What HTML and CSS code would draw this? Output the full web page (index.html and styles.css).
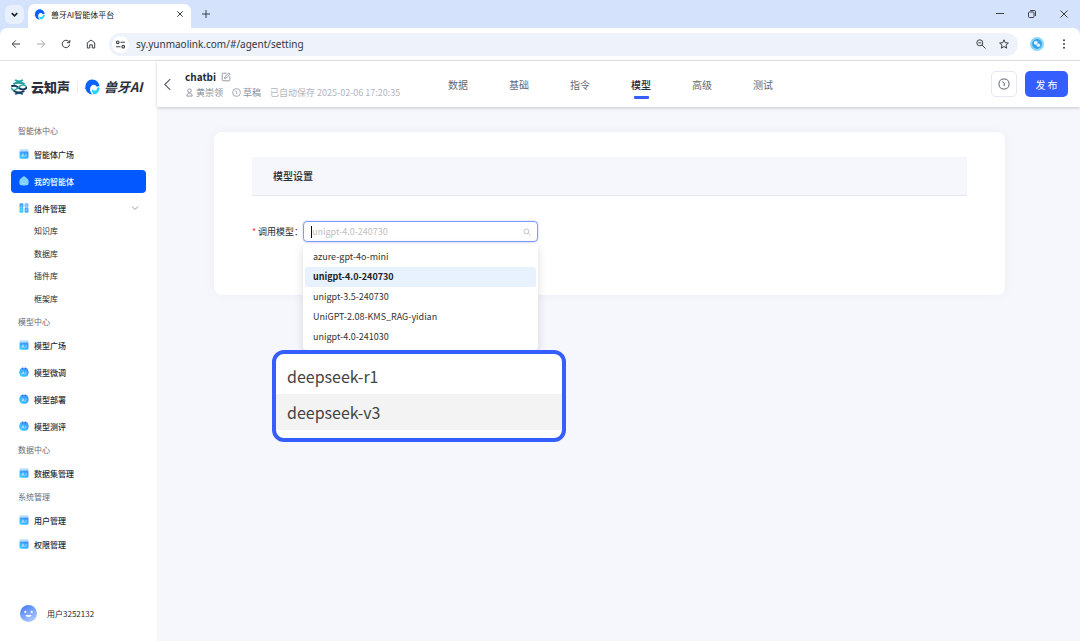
FILE: index.html
```html
<!DOCTYPE html>
<html lang="zh-CN">
<head>
<meta charset="utf-8">
<title>兽牙AI智能体平台</title>
<link rel="stylesheet" href="styles.css">
</head>
<body>
<svg class="sprite" aria-hidden="true">
  <defs>
    <linearGradient id="sky2" x1="1" y1="0" x2="0" y2="1"><stop offset="0" stop-color="#4a86ff"/><stop offset="1" stop-color="#2fd6ff"/></linearGradient>
    <linearGradient id="face" x1="0" y1="0" x2="0.6" y2="1"><stop offset="0" stop-color="#3b76f6"/><stop offset="1" stop-color="#a9c8ff"/></linearGradient>
    <symbol id="i-plaza" viewBox="0 0 10 10">
      <rect x="0.5" y="0.3" width="9" height="4" rx="1" fill="#b9dfff"/>
      <rect x="0.5" y="2.6" width="9" height="7.100" rx="1.4" fill="url(#sky2)"/>
      <path d="M2.600 7.800 4 4.800 5.400 7.800M3.100 6.900h1.800M7 4.800v3" fill="none" stroke="#c4e8ff" stroke-width="0.7"/>
    </symbol>
    <symbol id="i-robot" viewBox="0 0 10 10">
      <rect x="0" y="3" width="10" height="4.5" rx="1.5" fill="#8bd0ff"/>
      <rect x="0.800" y="0.800" width="8.400" height="8.900" rx="3.200" fill="url(#sky2)"/>
      <path d="M3.500 .6v1.8M6.500 .6v1.8" stroke="#2c6df0" stroke-width="0.9"/>
      <path d="M2.800 7.400 4.100 4.600 5.400 7.400M3.200 6.600h1.800M6.800 4.600v2.800" fill="none" stroke="#c4e8ff" stroke-width="0.7"/>
    </symbol>
    <symbol id="i-home" viewBox="0 0 10 10">
      <path d="M5 .3C6.500.8 8.300 2.600 9.200 3.600c.6.800.6 4 .1 4.900-.7 1.300-7.900 1.300-8.600 0C.2 7.600.2 4.400.8 3.600 1.700 2.600 3.500.8 5 .3Z" fill="#7fd2ff"/>
      <path d="M2.600 7.200h4.800" stroke="#a9e0ff" stroke-width="0.800"/>
    </symbol>
    <symbol id="i-grid" viewBox="0 0 10 10">
      <rect x="0.500" y="0.300" width="3.900" height="4.500" rx="0.800" fill="#49a5ff"/><rect x="5.600" y="0.300" width="3.900" height="4.500" rx="0.800" fill="#7cbcff"/>
      <rect x="0.500" y="4.800" width="3.900" height="4.900" rx="0.800" fill="#35cdff"/><rect x="5.600" y="4.800" width="3.900" height="4.900" rx="0.800" fill="#52a8ff"/>
      <path d="M1.800 3.400h1.400M6.800 3.400h1.400M1.800 7h1.400M6.800 7h1.400" stroke="#c4e8ff" stroke-width="0.700"/>
    </symbol>
    <symbol id="i-wave" viewBox="0 0 16 16">
      <path d="M8.200.5C12.200.5 15.400 3.700 15.500 7.600c-1-.5-2-.4-2.900.2C11.900 5.600 8.900 5 7.200 6.900 5.200 9.200 5.900 12.800 8.400 15.500 4.800 15.200 2.300 13 1.700 9.900L.4 8.900c.7-.1 1-.3 1.100-.9C1.300 3.900 4.300.5 8.200.5Z" fill="#0a62ff"/>
      <path d="M15.600 8.900c-.8-.8-2-.8-2.700 0 .3 1.900-1.300 3-2.900 2.600-1-.2-1.600-.8-1.900-1.500-.5 2.200.200 4.200 1.800 5.400 3.200-.3 5.600-2.900 5.700-6.500Z" fill="#22d6fa"/>
    </symbol>
    <symbol id="i-clock" viewBox="0 0 12 12"><rect x="1" y="1" width="10" height="10" rx="4.300" fill="none" stroke="currentColor"/><path d="M4.200 3.300 6.200 5.300V8" fill="none" stroke="currentColor"/></symbol>
  </defs>
</svg>

<header class="browser">
  <div class="tabstrip">
    <button class="tab-search" aria-label="搜索标签页"><svg viewBox="0 0 10 10"><path d="M2.500 3.700 5 6.200 7.500 3.700"/></svg></button>
    <div class="browser-tab">
      <svg class="favicon"><use href="#i-wave"/></svg>
      <span class="tab-title">兽牙AI智能体平台</span>
      <button class="plain" aria-label="关闭标签页"><svg class="line" viewBox="0 0 10 10"><path d="M2.300 2.300 7.700 7.700M7.700 2.300 2.300 7.700"/></svg></button>
    </div>
    <button class="plain new-tab" aria-label="新标签页"><svg class="line" viewBox="0 0 10 10"><path d="M5 1v8M1 5h8"/></svg></button>
    <div class="window-buttons">
      <button class="plain" aria-label="最小化"><svg class="line" viewBox="0 0 10 10"><path d="M1 4.500h8"/></svg></button>
      <button class="plain" aria-label="还原"><svg class="line" viewBox="0 0 10 10"><rect x="1.500" y="3" width="5.500" height="5.500" rx="1"/><path d="M3.200 1.500h4.300a1 1 0 0 1 1 1v4.500"/></svg></button>
      <button class="plain" aria-label="关闭"><svg class="line" viewBox="0 0 10 10"><path d="M1.500 1.500 8.500 8.500M8.500 1.500 1.500 8.500"/></svg></button>
    </div>
  </div>
  <div class="toolbar">
    <button class="plain" aria-label="后退"><svg class="line" viewBox="0 0 10 10"><path d="M9 5H1.300M4.800 1.400 1.200 5l3.600 3.600"/></svg></button>
    <button class="plain muted" aria-label="前进"><svg class="line" viewBox="0 0 10 10"><path d="M1 5h7.700M5.200 1.400 8.800 5 5.200 8.600"/></svg></button>
    <button class="plain" aria-label="刷新"><svg class="line" viewBox="0 0 10 10"><path d="M8.600 5.500A3.700 3.700 0 1 1 7.700 2.500L8.800 3.600M8.800 1v2.700H6"/></svg></button>
    <button class="plain" aria-label="主页"><svg class="line" viewBox="0 0 10 10"><path d="M1.300 9V3.800L5 1l3.700 2.800V9H6.300V5.800H3.700V9Z"/></svg></button>
    <div class="address">
      <button class="site-info" aria-label="网站信息"><svg class="line" viewBox="0 0 10 10"><circle cx="2.500" cy="3" r="1.200"/><path d="M5 3h4M1 7h4"/><circle cx="7.500" cy="7" r="1.200"/></svg></button>
      <input class="url" aria-label="地址栏" value="sy.yunmaolink.com/#/agent/setting">
      <button class="plain" aria-label="缩放"><svg class="line" viewBox="0 0 10 10"><circle cx="3.800" cy="3.800" r="3"/><path d="M6 6 9.500 9.500M2.400 3.800h2.800"/></svg></button>
      <button class="plain" aria-label="收藏"><svg class="line" viewBox="0 0 10 10"><path d="M5 .8 6.200 3.700 9.400 4 7 6.100 7.700 9.200 5 7.500 2.300 9.200 3 6.100.6 4 3.800 3.700Z"/></svg></button>
    </div>
    <button class="plain profile" aria-label="个人资料"><svg viewBox="0 0 14 14"><circle cx="7" cy="7" r="7" fill="#8fd7fa"/><circle cx="7" cy="7" r="4.900" fill="#37a5ee"/><circle cx="5.800" cy="5.800" r="1.900" fill="#f2fbff"/><circle cx="8.400" cy="8.300" r="1.700" fill="#d9f1ff"/></svg></button>
    <button class="plain more" aria-label="更多"><svg viewBox="0 0 10 10"><circle cx="5" cy="1.200" r="1"/><circle cx="5" cy="5" r="1"/><circle cx="5" cy="8.800" r="1"/></svg></button>
  </div>
</header>

<div class="app">
  <aside class="sidebar">
    <div class="brands">
      <div class="brand">
        <svg viewBox="0 0 16 16" fill="none"><path d="M4.200.8C5.500 2.800 10.500 2.800 11.800.8" stroke="#1ea6a0" stroke-width="1.800"/><path d="M2.600 5.300C4.200 3.200 11.800 3.200 13.400 5.300" stroke="#1c9b9b" stroke-width="1.800"/><path d="M.3 7.200C4.500 5.600 6 7.500 8 9c2 1.500 4.500 2.200 6.800.5.500-.5.700-1.200.4-2" stroke="#16345c" stroke-width="2"/><path d="M.8 8.600c-.3 1.600.6 2.800 2.600 2.600C6.500 10.800 8 6.500 11 6c1.500-.2 3 .2 4 1" stroke="#2aa7a2" stroke-width="1.600"/><path d="M2.600 12c3 1.600 7.800 1.600 10.800 0" stroke="#16345c" stroke-width="1.700"/><path d="M4.200 15.400c1.500-1.800 6.100-1.800 7.600 0" stroke="#17566f" stroke-width="1.800"/></svg>
        <span class="brand-name">云知声</span>
      </div>
      <div class="brand">
        <svg><use href="#i-wave"/></svg>
        <span class="brand-name slanted">兽牙AI</span>
      </div>
    </div>
    <nav class="menu">
      <section>
        <h2>智能体中心</h2>
        <ul>
          <li><a href="#plaza"><svg><use href="#i-plaza"/></svg>智能体广场</a></li>
          <li><a class="active" href="#mine"><svg><use href="#i-home"/></svg>我的智能体</a></li>
          <li><a href="#parts"><svg><use href="#i-grid"/></svg>组件管理<svg class="chevron" viewBox="0 0 8 8"><path d="M1 2.500 4 5.500 7 2.500"/></svg></a>
            <div class="submenu"><a href="#kb">知识库</a><a href="#db">数据库</a><a href="#plugin">插件库</a><a href="#frame">框架库</a></div>
          </li>
        </ul>
      </section>
      <section>
        <h2>模型中心</h2>
        <ul>
          <li><a href="#models"><svg><use href="#i-plaza"/></svg>模型广场</a></li>
          <li><a href="#tune"><svg><use href="#i-robot"/></svg>模型微调</a></li>
          <li><a href="#deploy"><svg><use href="#i-robot"/></svg>模型部署</a></li>
          <li><a href="#eval"><svg><use href="#i-robot"/></svg>模型测评</a></li>
        </ul>
      </section>
      <section>
        <h2>数据中心</h2>
        <ul><li><a href="#datasets"><svg><use href="#i-plaza"/></svg>数据集管理</a></li></ul>
      </section>
      <section>
        <h2>系统管理</h2>
        <ul class="tight">
          <li><a href="#users"><svg><use href="#i-plaza"/></svg>用户管理</a></li>
          <li><a href="#roles"><svg><use href="#i-plaza"/></svg>权限管理</a></li>
        </ul>
      </section>
    </nav>
    <div class="account">
      <svg viewBox="0 0 16 16"><circle cx="8" cy="8" r="8" fill="url(#face)"/><circle cx="5" cy="6.500" r="1" fill="#fff"/><circle cx="11" cy="6.500" r="1" fill="#fff"/><path d="M5.200 9.300h5.600c-.6 2.600-5 2.600-5.600 0Z" fill="#fff"/></svg>
      <span>用户3252132</span>
    </div>
  </aside>

  <div class="workspace">
    <header class="topbar">
      <div class="agent">
        <button class="plain back" aria-label="返回"><svg class="line" viewBox="0 0 8 12"><path d="M6.500 1 1.500 6l5 5"/></svg></button>
        <div class="agent-info">
          <div class="agent-title"><h1>chatbi</h1><button class="plain edit" aria-label="编辑"><svg class="line" viewBox="0 0 10 10"><path d="M5.500 1.200H2.200a1 1 0 0 0-1 1v5.600a1 1 0 0 0 1 1h5.600a1 1 0 0 0 1-1V4.500M3.500 6.500l.4-1.700L8 .9l1.200 1.200-4 4Z"/></svg></button></div>
          <div class="agent-meta">
            <span class="who"><svg class="line" viewBox="0 0 10 10"><circle cx="5" cy="3" r="2"/><path d="M2 9c0-4.500 6-4.500 6 0Z"/></svg>黄崇领</span>
            <span class="who"><svg><use href="#i-clock"/></svg>草稿</span>
            <span class="saved">已自动保存 2025-02-06 17:20:35</span>
          </div>
        </div>
      </div>
      <nav class="tabs"><a href="#data">数据</a><a href="#base">基础</a><a href="#prompt">指令</a><a class="current" href="#model">模型</a><a href="#adv">高级</a><a href="#test">测试</a></nav>
      <div class="actions">
        <button class="history" aria-label="历史版本"><svg><use href="#i-clock"/></svg></button>
        <button class="publish">发 布</button>
      </div>
    </header>
    <main>
      <section class="card">
        <h2 class="card-title">模型设置</h2>
        <form class="field">
          <label for="model"><span class="required">*</span>调用模型：</label>
          <div class="select">
            <div class="control">
              <span class="caret"></span>
              <input id="model" type="text" role="combobox" aria-expanded="true" aria-controls="models" placeholder="unigpt-4.0-240730">
              <svg class="line" viewBox="0 0 10 10"><circle cx="4.200" cy="4.200" r="3"/><path d="M6.500 6.500 9.300 9.300"/></svg>
            </div>
            <ul class="options" id="models" role="listbox">
              <li role="option">azure-gpt-4o-mini</li>
              <li class="selected" role="option" aria-selected="true">unigpt-4.0-240730</li>
              <li role="option">unigpt-3.5-240730</li>
              <li role="option">UniGPT-2.08-KMS_RAG-yidian</li>
              <li role="option">unigpt-4.0-241030</li>
            </ul>
            <ul class="callout" role="listbox" aria-label="DeepSeek">
              <li role="option">deepseek-r1</li>
              <li class="hovered" role="option">deepseek-v3</li>
            </ul>
          </div>
        </form>
      </section>
    </main>
  </div>
</div>
</body>
</html>
```
FILE: styles.css
```css
* { box-sizing: border-box; }
body {
  margin: 0;
  min-height: 100vh;
  display: flex;
  flex-direction: column;
  font-family: "Noto Sans CJK SC", sans-serif;
  font-size: 9px;
  color: #252a35;
  background: #f6f7fc;
}
h1, h2, ul { margin: 0; padding: 0; font-size: inherit; }
ul { list-style: none; }
a { color: inherit; text-decoration: none; }
button, input { font: inherit; color: inherit; }
svg { flex: none; display: block; }
.sprite { position: absolute; width: 0; height: 0; }
.line { fill: none; stroke: currentColor; }
.plain {
  padding: 0;
  border: 0;
  background: none;
  display: grid;
  place-items: center;
}
.plain svg { width: 10px; height: 10px; }

/* Browser frame */
.browser { background: #d5e2fc; color: #3c4046; border-bottom: 1px solid #dfe1e5; }
.tabstrip { display: flex; align-items: center; height: 28px; padding: 0 11px 0 5px; }
.tab-search {
  width: 19px; height: 19px; padding: 4px;
  border: 0; border-radius: 6px; background: #e9f0fd;
}
.tab-search svg { fill: none; stroke: #222; stroke-width: 1.5; }
.browser-tab {
  align-self: flex-end;
  display: flex; align-items: center; gap: 6px;
  width: 163px; height: 24px; margin-left: 4px; padding: 0 6px 4px;
  border-radius: 7px 7px 0 0; background: #fff;
}
.favicon { width: 11px; height: 11px; }
.tab-title { flex: 1; font-size: 8px; color: #222; }
.new-tab { margin-left: 10px; }
.window-buttons { display: flex; gap: 22px; margin-left: auto; }
.toolbar {
  display: flex; align-items: center; gap: 15px;
  height: 32px; padding: 0 11px;
  border-radius: 7px 7px 0 0; background: #fff;
}
.muted { color: #a5a7ab; }
.address {
  flex: 1; display: flex; align-items: center; gap: 13px;
  height: 23px; margin-right: -3px; margin-left: -2px; padding: 0 9px 0 3px;
  border-radius: 12px; background: #edf2fb;
}
.site-info {
  width: 17px; height: 17px; padding: 3px;
  border: 0; border-radius: 50%; background: #fff;
}
.url {
  flex: 1; min-width: 0; margin-left: -6px; padding: 0;
  border: 0; outline: 0; background: none;
  font-family: "Noto Sans", sans-serif; font-size: 10px; color: #33373d;
}
.profile svg { width: 14px; height: 14px; }
.more { fill: #3c4046; }

/* Layout */
.app { flex: 1; display: grid; grid-template-columns: 157px 1fr; }
.sidebar { display: flex; flex-direction: column; padding: 15px 11px 19px; background: #fff; }
.workspace { min-width: 0; }

/* Sidebar */
.brands { display: flex; gap: 7px; height: 22px; }
.brand { display: flex; align-items: center; gap: 4px; }
.brand + .brand { padding-left: 7px; background: linear-gradient(#eceef2, #eceef2) left / 1px 12px no-repeat; }
.brand svg { width: 16px; height: 16px; }
.brand-name { font-size: 13px; font-weight: 900; line-height: 22px; white-space: nowrap; color: #2b303c; }
.slanted { font-size: 13px; font-style: italic; font-weight: 700; }
.menu { display: flex; flex-direction: column; gap: 1px; margin-top: 22px; }
.menu h2 { padding-left: 7px; font-size: 8px; font-weight: 400; line-height: 22px; color: #666b78; }
.menu ul { display: flex; flex-direction: column; gap: 4px; margin-top: 1px; }
.menu .tight { gap: 1px; }
.menu li > a {
  display: flex; align-items: center; gap: 5px;
  height: 23px; padding: 0 7px 1px 8px;
  border-radius: 4px; font-size: 8px; font-weight: 500;
}
.menu li svg { width: 10px; height: 10px; }
.menu .active { color: #fff; background: #0458ff; }
.menu .chevron { width: 8px; height: 8px; margin-left: auto; fill: none; stroke: #969ba8; }
.submenu { display: grid; grid-auto-rows: 1fr; height: 90px; padding-left: 23px; font-size: 8px; }
.submenu a { display: flex; align-items: center; padding-bottom: 1px; }
.account { display: flex; align-items: center; gap: 10px; margin-top: auto; padding-left: 9px; font-size: 8px; }
.account svg { width: 17px; height: 17px; }

/* Top bar */
.topbar {
  display: grid; grid-template-columns: 285px 1fr auto; align-items: center;
  height: 46px; padding: 0 12px 0 6px;
  background: #fff; box-shadow: 0 1px 3px rgb(0 0 0 / 20%);
}
.agent { display: flex; align-items: center; gap: 13px; }
.back { color: #555b68; }
.back svg { width: 9px; height: 13px; }
.agent-title, .agent-meta, .who { display: flex; align-items: center; }
.agent-title { gap: 5px; }
h1 { font-size: 10px; font-weight: 700; line-height: 16px; }
.edit { color: #9499a5; }
.agent-meta { gap: 9px; line-height: 15px; white-space: nowrap; color: #8b909c; }
.who { gap: 2px; }
.who svg { width: 9px; height: 9px; }
.saved { color: #b3b6be; }
.tabs { display: flex; gap: 41px; font-size: 10px; color: #626875; }
.tabs a { display: grid; justify-items: center; padding-top: 7px; line-height: 18px; }
.tabs a::after { content: ""; width: 15px; height: 3px; margin-top: 2px; border-radius: 1px; }
.tabs .current { font-weight: 500; color: #252a35; }
.tabs .current::after { background: #355eff; }
.actions { display: flex; gap: 8px; }
.history { width: 26px; height: 26px; padding: 6px; border: 1px solid #e6e8f4; border-radius: 5px; background: #fff; color: #555b68; }
.history svg { width: 12px; height: 12px; }
.publish { width: 43px; height: 26px; padding: 0; border: 0; border-radius: 5px; font-size: 10px; color: #fff; background: #355eff; }

/* Model settings */
.card {
  min-height: 163px; margin: 25px 75px 0 57px; padding: 25px 38px;
  border-radius: 8px; background: #fff; box-shadow: 0 0 12px rgb(40 60 140 / 4%);
}
.card-title {
  padding: 0 21px; border-bottom: 1px solid #e5eaf2; background: #f6f7fc;
  font-size: 10px; font-weight: 500; line-height: 38px;
}
.field { display: flex; align-items: center; margin-top: 25px; }
.field label { display: flex; width: 51px; white-space: nowrap; }
.required { width: 8px; color: #ff3b3b; }
.select { position: relative; width: 235px; }
.control {
  display: flex; align-items: center;
  height: 21px; padding: 0 6px 0 7px;
  border: 1px solid #7c9bff; border-radius: 4px; background: #fff;
  box-shadow: 0 0 1px 1px rgb(53 94 255 / 12%);
}
.caret { width: 1px; height: 12px; background: #111; }
.control input { flex: 1; min-width: 0; padding: 0; border: 0; outline: 0; background: none; }
.control input::placeholder { color: #bfbfbf; }
.control svg { width: 8px; height: 8px; color: #b5b5b5; }
.options {
  position: absolute; top: 23px; left: 0; width: 100%; padding: 3px 2px;
  border-radius: 4px; background: #fff;
  box-shadow: 0 3px 10px rgb(0 0 0 / 14%);
}
.options li { padding: 0 8px; border-radius: 2px; line-height: 20px; color: #333; }
.options .selected { font-weight: 700; color: #222; background: #e8f2ff; }
.callout {
  position: absolute; top: 129px; left: -31px; width: 294px; padding: 4px 0 8px;
  border: 4px solid #355eff; border-radius: 12px; background: #fff;
}
.callout li { padding: 0 11px; font-size: 16px; line-height: 36px; color: #444; }
.callout .hovered { background: #f3f3f3; }
```
